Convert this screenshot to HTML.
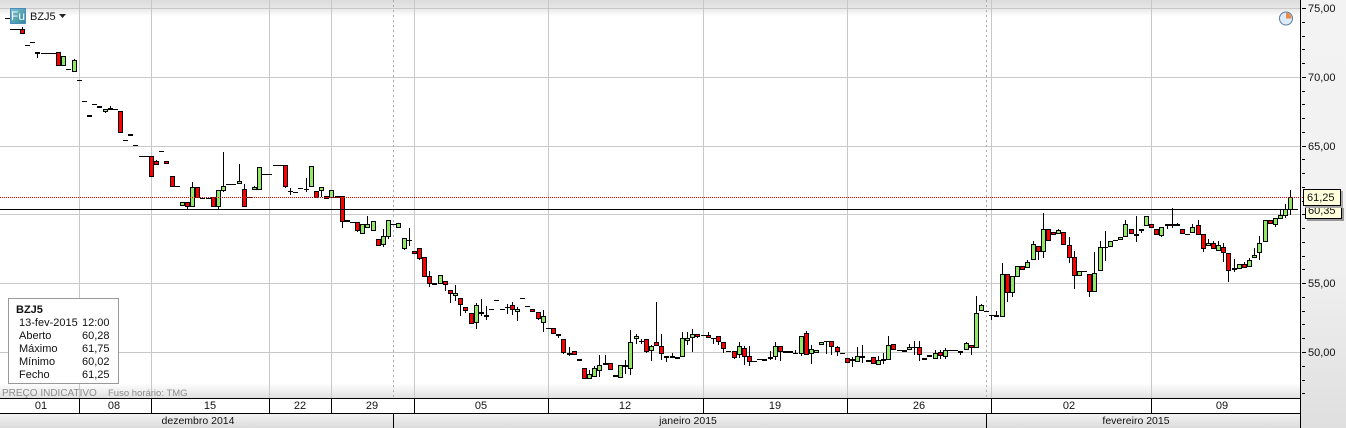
<!DOCTYPE html>
<html><head><meta charset="utf-8"><style>
html,body{margin:0;padding:0;background:#fff}
#c{position:relative;width:1346px;height:428px;overflow:hidden;background:#fff;font-family:"Liberation Sans",sans-serif;font-size:11px;color:#111}
#c div{position:absolute;white-space:nowrap}
#c svg{position:absolute;left:0;top:0}
.d,.m{text-align:center;transform:translateX(-50%);line-height:14px}
.d{top:399px}.m{top:414px;font-size:10.5px}
.p{left:1308px;font-size:11px;line-height:14px}
.i{font-size:11px;line-height:13px}
</style></head><body><div id="c">
<div style="left:0;top:0;width:1300px;height:16px;background:linear-gradient(#dcdcdc,#e6e6e6 50%,#fff)"></div>
<div style="left:0;top:383px;width:1300px;height:16px;background:linear-gradient(#fff,#dedede)"></div>
<div style="left:1301px;top:0;width:45px;height:428px;background:linear-gradient(#f3f3f3,#f1f1f1 60%,#dfdfdf)"></div>
<div style="left:0;top:414px;width:1300px;height:14px;background:linear-gradient(#f2f2f2,#dcdcdc)"></div>
<svg id="s" width="1346" height="428" viewBox="0 0 1346 428" shape-rendering="crispEdges">
<path d="M0 8.5H1300M0 77.5H1300M0 146.5H1300M0 214.5H1300M0 283.5H1300M0 352.5H1300M79.5 0V398M151.5 0V398M269.5 0V398M331.5 0V398M414.5 0V398M548.5 0V398M703.5 0V398M847.5 0V398M991.5 0V398M1151.5 0V398" stroke="#c8c8c8" fill="none"/>
<path d="M393.5 0V398M986.5 0V398" stroke="#aaa" stroke-dasharray="2 3" fill="none"/>
<g id="cd"></g>
<path d="M0 197.5H1303" stroke="#e00000" stroke-dasharray="1 1" fill="none"/>
<path d="M0 209.5H1298" stroke="#000" fill="none"/>
<path d="M0 398.5H1300M0 413.5H1300M1300.5 0V428M79.5 398V413M151.5 398V413M269.5 398V413M331.5 398V413M414.5 398V413M548.5 398V413M703.5 398V413M847.5 398V413M991.5 398V413M1151.5 398V413M393.5 414V428M986.5 414V428" stroke="#000" fill="none"/>
<g id="tk"></g>
</svg>
<div class="p" style="top:2px">75,00</div>
<div class="p" style="top:71px">70,00</div>
<div class="p" style="top:140px">65,00</div>
<div class="p" style="top:277px">55,00</div>
<div class="p" style="top:346px">50,00</div>
<div style="left:1305px;top:206px;width:33px;height:11px;background:#ffffdc;border:1px solid #000;box-shadow:2px 2px 0 #999;font-size:11px;line-height:9px;padding-left:2px;overflow:hidden">60,35</div>
<div style="left:1303px;top:189px;width:33px;height:15px;background:#ffffdc;border:1px solid #000;box-shadow:2px 2px 0 #aaa;font-size:11px;line-height:17px;padding-left:3px">61,25</div>
<div style="left:10px;top:8px;width:14px;height:14px;border:1px solid #4a8cc0;background:linear-gradient(135deg,#7fc0cf,#2f8a96);color:#fff;font-size:12px;line-height:14px;text-align:center">Fu</div>
<div style="left:30px;top:10px;font-size:11px;line-height:14px">BZJ5</div>
<svg width="1346" height="428" style="pointer-events:none"><path d="M59 14h7l-3.5 4z" fill="#222"/>
<circle cx="1286" cy="18.5" r="6.5" fill="#dcebf7" stroke="#5c7ca6"/><path d="M1286 18.5V12.5a6 6 0 0 1 5.5 6z" fill="#ee8a48"/></svg>
<div style="left:8px;top:298px;width:109px;height:84px;background:#fff;border:1px solid #999"></div>
<div class="i" style="left:16px;top:304px;font-weight:bold">BZJ5</div>
<div class="i" style="left:19px;top:317px">13-fev-2015</div><div class="i" style="left:82px;top:317px">12:00</div>
<div class="i" style="left:19px;top:330px">Aberto</div><div class="i" style="left:82px;top:330px">60,28</div>
<div class="i" style="left:19px;top:343px">Máximo</div><div class="i" style="left:82px;top:343px">61,75</div>
<div class="i" style="left:19px;top:356px">Mínimo</div><div class="i" style="left:82px;top:356px">60,02</div>
<div class="i" style="left:19px;top:369px">Fecho</div><div class="i" style="left:82px;top:369px">61,25</div>
<div style="left:2px;top:387px;color:#8c8c8c;font-size:10px;line-height:13px">PREÇO INDICATIVO</div>
<div style="left:108px;top:387px;color:#8c8c8c;font-size:9.5px;line-height:13px">Fuso horário: TMG</div>
<div class="d" style="left:41px">01</div><div class="d" style="left:114px">08</div><div class="d" style="left:210px">15</div><div class="d" style="left:300px">22</div><div class="d" style="left:372px">29</div><div class="d" style="left:481px">05</div><div class="d" style="left:625px">12</div><div class="d" style="left:775px">19</div><div class="d" style="left:919px">26</div><div class="d" style="left:1069px">02</div><div class="d" style="left:1222px">09</div>
<div class="m" style="left:198px">dezembro 2014</div><div class="m" style="left:688px">janeiro 2015</div><div class="m" style="left:1136px">fevereiro 2015</div>
</div>
<script>
var D="d5,18 d10,29 d15,29 r20,29,34,27 d25,45 d30,42 k35,52,52,57 d41,53 d46,53 d51,53 r56,52,66 g61,56,66 d66,69 g72,60,72,59 d77,80 d82,101 k87,115 d92,104 k97,106 g103,109,112,109,113 k108,108,106 d113,109 r118,111,133 d123,140 k128,134 d133,145 d139,156 d144,156 r149,156,177 r154,161,165,160 d159,151 r164,161,164 r170,176,187 d175,186 g180,202,206 r185,202,207,202,209 g190,187,207,182 r195,187,198 d200,198 d206,198 r211,197,207 g216,190,207,190,209 g221,186,191,152,192 d226,184 d231,184 g237,181,184,164 r242,189,207,184 d247,197 g252,187,190,186 g257,167,190 d262,174 d267,174 d273,165 d278,165 r283,165,187,165,188 d288,191,188,194 d293,192 d298,188 d304,189,178,191 g309,166,187 r314,191,198 g319,187,191,187,197 r324,196,199 g329,190,198 k335,196 r340,196,222,196,228 k345,220 d350,222 r355,222,231,222,232 g360,224,234 g365,224,228,216 g371,221,231 r376,239,246 g381,236,245,229,247 g386,220,237,220,239 d391,224 g396,223,228 g402,238,249,238,250 d407,240,228,245 r412,251,254 r417,248,259,248,260 r422,257,277 r427,276,284,271,287 k432,283 g438,275,284 r443,281,285,281,291 r448,290,294,290,303 g453,293,296,285,301 r458,298,305,298,316 r463,307,311,307,313 r469,313,324 g474,305,323,303,329 k479,312,299,315 k484,315,306,319 d489,309 d494,300 d500,309 d505,307,304,313 r510,305,310,302,315 g515,309,312,307,321 d520,298 d525,306 r530,309,312 r536,312,319,312,320 g541,316,323,310,332 d546,328 r551,328,334 k556,334,334,337 r561,339,353,339,354 k567,353,347,355 r572,351,355 k577,359 r582,368,379 g587,374,379,370 g592,368,377,366 g597,365,371,355,377 k603,363,355,363 r608,363,370 r613,375,377 g618,365,378 k623,365,360,373 g628,342,369,330,375 g634,336,339,334,344 d639,341,339,343 r644,339,352,339,353 g649,346,351,345,361 r654,342,346,302 r659,346,354,334,360 k664,356,356,361 k670,356,353 k675,357 g680,338,357,332 g685,338,341,332,345 g690,334,338,329,352 r695,334,337,334,338 d701,335 r706,335,338,332 d711,338,338,343 r716,336,342,336,345 r721,342,349,342,353 d726,351 r732,351,358,351,359 g737,346,355,342,358 r742,348,357,346,365 r747,356,362,346,366 d752,361 d757,359 g762,359,361 k768,357,351,359 g773,346,357,342,360 r778,346,352,346,361 g783,351,353 k788,351 d793,353,350 g799,336,354,336,356 r804,333,355,331 g809,349,354,345,364 g814,350,353 g819,342,345 d824,341,341,353 r829,341,347,341,355 r835,347,352,346,356 d840,353 r845,358,363 r850,359,361,357,367 g855,356,362,347 r860,356,358,345,363 k866,360 r871,357,364 g876,360,365,356 k881,359,353,363 g886,345,360,336 r891,344,350 d897,350 k902,350 g907,347,350,344 d912,347,341,354 r917,347,355,341,361 k922,358 r927,355,357 g933,353,359,350 r938,352,356,350,359 g943,350,357,348,359 d948,350 d953,350 r958,351,353,351,355 g964,343,350,342 r969,345,348,345,355 g974,313,348,296 g979,305,311,304 d984,311 d989,315,315,319 k994,315,311 g1000,274,317,263 r1005,274,293,274,302 g1010,276,293,276,297 g1015,266,277 r1020,266,270 g1025,262,268,260 g1031,244,260,241 r1036,246,252,246,260 g1041,229,252,213,258 r1046,229,241 r1051,232,235 g1056,230,234,229 r1061,232,245 r1067,245,258,237,263 r1072,257,276,251,289 g1077,271,276 d1082,271 r1087,274,292,274,297 g1092,273,292,252 g1098,247,271,241 d1103,247,231,260 g1108,241,247 d1113,240 g1118,237,240 g1123,224,237,220 r1129,229,234 k1134,234,216,241 k1139,229,229,232 g1144,216,226 r1149,224,228 r1154,229,235 g1159,227,236,227,237 k1165,224,224,228 r1170,224,226,208,228 r1175,224,226,223 r1180,229,234 d1185,234 g1190,227,233,224 r1196,225,235,220 r1201,234,249,234,252 g1206,243,246,239 r1211,243,249,241 g1216,245,251,241 r1221,247,253,243,262 r1226,253,271,253,282 g1232,268,270,259,272 g1237,264,269 r1242,264,268,262 g1247,260,267,258 g1252,255,258,248 g1257,243,253,236,260 g1263,220,242 r1268,220,224 g1273,218,225,218,227 g1278,215,219,209 g1283,209,216,204,218 g1288,197,210,190,215";
var w="",k="",r="",g="";
D.split(" ").forEach(function(e){var t=e[0],v=e.slice(1).split(",").map(Number),x=v[0],cx=x+2.5;
 if(t=="d"||t=="k"){var y=v[1],hi=v[2],lo=v[3];
  if(hi!==undefined||lo!==undefined){var a=hi===undefined?y:hi,b=lo===undefined?y:lo;w+="M"+cx+" "+a+"V"+(b+1);}
  if(t=="d")w+="M"+x+" "+(y+.5)+"h5";else k+="M"+x+" "+y+"h5v2h-5z";
 }else{var T=v[1],B=v[2],H=v[3],L=v[4];
  if(H!==undefined&&H<T)w+="M"+cx+" "+H+"V"+T;
  if(L!==undefined&&L>B)w+="M"+cx+" "+B+"V"+L;
  var p="M"+(x+.5)+" "+(T+.5)+"h4v"+Math.max(B-T-1,1)+"h-4z";
  if(t=="r")r+=p;else g+=p;}
});
var t="";for(var i=0;i<=28;i++){var y=Math.round(8+i*13.76);t+="M1302 "+(y+.5)+"h"+(i%5==0?4:3);}
document.getElementById("cd").innerHTML='<path d="'+w+'" stroke="#000" fill="none"/><path d="'+k+'" fill="#000"/><path d="'+r+'" fill="#f00" stroke="#000"/><path d="'+g+'" fill="#90e866" stroke="#000"/>';
document.getElementById("tk").innerHTML='<path d="'+t+'" stroke="#000" fill="none"/>';
</script>
</body></html>
